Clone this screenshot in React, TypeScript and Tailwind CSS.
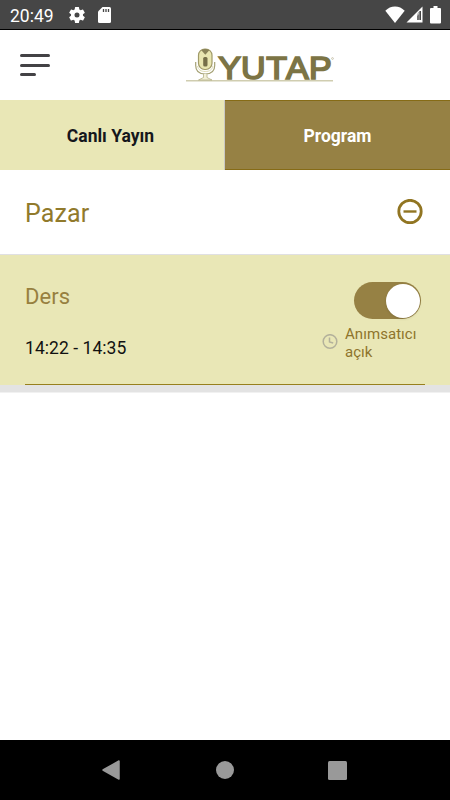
interface TabProps {
  title: string;
  className: string;
}

interface ProgramProps {
  item: { title: string; time: string; reminder: string };
}

const StatusBar = () => {
  return (
    <div className="h-[30px] shrink-0 bg-[#464646] border-b border-black flex items-center pl-[10px] pr-[9px] text-white">
      <p className="w-[45px] pt-[2px] text-[17.5px] leading-[20px] whitespace-nowrap">
        20:49
      </p>
      {/* settings */}
      <svg className="ml-[12px] mt-px w-[20px] h-[20px]" viewBox="0 0 24 24" fill="#fff">
        <path d="M19.14 12.94c.04-.3.06-.61.06-.94 0-.32-.02-.64-.07-.94l2.03-1.58a.49.49 0 0 0 .12-.61l-1.92-3.32a.49.49 0 0 0-.59-.22l-2.39.96c-.5-.38-1.03-.7-1.62-.94l-.36-2.54a.48.48 0 0 0-.48-.41h-3.84a.47.47 0 0 0-.47.41l-.36 2.54c-.59.24-1.13.57-1.62.94l-2.39-.96a.48.48 0 0 0-.59.22L2.74 8.87a.47.47 0 0 0 .12.61l2.03 1.58c-.05.3-.09.63-.09.94s.02.64.07.94l-2.03 1.58a.49.49 0 0 0-.12.61l1.92 3.32c.12.22.37.29.59.22l2.39-.96c.5.38 1.03.7 1.62.94l.36 2.54c.05.24.24.41.48.41h3.84c.24 0 .44-.17.47-.41l.36-2.54c.59-.24 1.13-.56 1.62-.94l2.39.96c.22.08.47 0 .59-.22l1.92-3.32a.47.47 0 0 0-.12-.61zM12 15a3 3 0 1 1 0-6 3 3 0 0 1 0 6z" />
      </svg>
      {/* sd card */}
      <svg className="ml-[11px] mt-px w-[13px] h-[16px]" viewBox="0 0 13 16">
        <path d="M4.5 0h7A1.5 1.5 0 0 1 13 1.5v13a1.5 1.5 0 0 1-1.5 1.5h-10A1.5 1.5 0 0 1 0 14.5V4.5z" fill="#fff" />
        <path d="M5.5 2v3M8 2v3M10.5 2v3" stroke="#464646" strokeWidth="1.3" />
      </svg>
      <div className="ml-auto flex items-center">
        {/* wifi */}
        <svg className="w-[20px] h-[17px]" viewBox="0 0 20 17">
          <path d="M10 17L.3 4.8C3 2 6.3.5 10 .5s7 1.5 9.7 4.3z" fill="#fff" />
        </svg>
        {/* mobile signal */}
        <svg className="ml-[1px] w-[17px] h-[17px]" viewBox="0 0 17 17">
          <path d="M16.5.5v16H.5z" fill="#fff" />
          <path d="M15 5v9h-1.5V5z" fill="#464646" />
          <path d="M13.5 5v9H11V8.5z" fill="#464646" fillOpacity=".75" />
          <path d="M11 8.5l2-2V8l-2 2z" fill="#fff" fillOpacity=".6" />
        </svg>
        {/* battery */}
        <svg className="ml-[7px] w-[11px] h-[18px]" viewBox="0 0 11 18">
          <path d="M3.5 0h4v2H10a1 1 0 0 1 1 1v13.5a1 1 0 0 1-1 1H1a1 1 0 0 1-1-1V3a1 1 0 0 1 1-1h2.5z" fill="#fff" />
        </svg>
      </div>
    </div>
  );
};

const Logo = () => {
  return (
    <svg className="w-[150px] h-[40px]" viewBox="185 45 150 40">
      <path d="M186 80.800H333" stroke="#d0cdb0" strokeWidth="1.5" />
      {/* microphone */}
      <path d="M195.700 62v3.500c0 5.500 3.500 8.500 9.500 8.500s9.500-3 9.500-8.500V62" fill="none" stroke="#a5a174" strokeWidth="1.2" />
      <path d="M197.500 66c.8 4 3.500 5.500 7.700 5.500s6.900-1.500 7.700-5.500" fill="none" stroke="#dedbb4" />
      <path d="M203.500 74v3.500l-5 2.500h13.500l-5-2.500V74" fill="#f1efd6" stroke="#b5b189" strokeWidth=".8" />
      <rect x="198.500" y="49" width="13.500" height="20.500" rx="6.200" fill="#e9e6b0" stroke="#a09a68" strokeWidth="1.2" />
      <path d="M201.300 50.300c2.200-1.800 5.800-1.800 8 0l-4 4.500z" fill="#8a8358" />
      <rect x="203.200" y="57" width="4.300" height="9.500" rx="1.500" fill="#766f48" />
      {/* brand name, spaced letter by letter */}
      <text
        x="202.2 223.2 246.6 264.9 286.2"
        y="79"
        transform="scale(1.08 1)"
        fill="#7c7445"
        stroke="#7c7445"
        strokeWidth="1.7"
        className="font-['Liberation_Sans',sans-serif] text-[31.5px]"
      >
        YUTAP
      </text>
      <circle cx="332.500" cy="58.500" r=".9" fill="none" stroke="#a39b78" strokeWidth=".5" />
    </svg>
  );
};

const Header = () => {
  return (
    <div className="h-[70px] shrink-0 flex pl-[20px]">
      <div className="flex flex-col pt-[24px] w-[30px]">
        <div className="h-[3px] w-[30px] rounded-full bg-[#434245]"></div>
        <div className="mt-[6.5px] h-[3px] w-[30px] rounded-full bg-[#434245]"></div>
        <div className="mt-[6px] h-[3px] w-[16px] rounded-full bg-[#434245]"></div>
      </div>
      <div className="ml-[135px] pt-[15px]">
        <Logo />
      </div>
    </div>
  );
};

const Tab = ({ title, className }: TabProps) => {
  return (
    <div
      className={`flex items-center justify-center pt-[2px] text-[17.5px] font-bold whitespace-nowrap ${className}`}
    >
      {title}
    </div>
  );
};

const ProgramItem = ({ item }: ProgramProps) => {
  return (
    <div className="h-[130px] bg-[#e9e7b6] px-[25px]">
      <div className="h-full flex justify-between border-b border-[#97801d]">
        <div className="flex flex-col">
          <p className="mt-[28px] text-[22px] leading-[28px] tracking-[0.1px] text-[#97803f]">{item.title}</p>
          <p className="mt-[26px] text-[17.5px] leading-[22px] tracking-[0.05px] text-[#111]">{item.time}</p>
        </div>

        {/* reminder */}
        <div className="w-[103px] flex flex-col">
          <div className="mt-[27px] ml-[32px] w-[67px] h-[37px] rounded-full bg-[#968144] flex items-center justify-end pr-[1px]">
            <div className="size-[34px] rounded-full bg-white shadow-sm"></div>
          </div>
          <div className="mt-[7px] flex">
            <svg className="mt-[8px] w-[16px] h-[16px]" viewBox="0 0 16 16" fill="none" stroke="#b3b19b" strokeWidth="1.5">
              <circle cx="8" cy="7.5" r="6.8" />
              <path d="M7.5 3.5V8l3.700 1" />
            </svg>
            <p className="ml-[7px] w-[76px] text-[15px] leading-[17.5px] tracking-[0.05px] text-[#8e742c]">
              {item.reminder}
            </p>
          </div>
        </div>
      </div>
    </div>
  );
};

const NavigationBar = () => {
  return (
    <div className="h-[60px] shrink-0 bg-black flex items-center pl-[102px]">
      <svg className="w-[18px] h-[20px]" viewBox="0 0 18 20">
        <path d="M17 1v18L1 10z" fill="#999" stroke="#999" strokeWidth="1.5" strokeLinejoin="round" />
      </svg>
      <div className="ml-[96px] size-[18px] rounded-full bg-[#999]"></div>
      <div className="ml-[94px] size-[19px] rounded-[1.5px] bg-[#999]"></div>
    </div>
  );
};

const App = () => {
  const lesson = { title: "Ders", time: "14:22 - 14:35", reminder: "Anımsatıcı açık" };

  return (
    <div className="w-[450px] h-[800px] flex flex-col overflow-hidden bg-white font-[Roboto,sans-serif]">
      <StatusBar />
      <Header />

      {/* tabs */}
      <div className="h-[70px] shrink-0 flex">
        <Tab title="Canlı Yayın" className="w-[224px] pr-[3px] bg-[#e9e7b6] text-[#15171c]" />
        <div className="w-px bg-[#c9c8c4]"></div>
        <Tab title="Program" className="flex-1 bg-[#968144] border-y border-[#866b16] text-white" />
      </div>

      {/* day */}
      <div className="h-[85px] shrink-0 flex items-center justify-between pl-[25px] pr-[27px] border-b border-[#e0e0e3]">
        <p className="pt-[3px] text-[25px] leading-[30px] tracking-[0.1px] text-[#917a2c]">Pazar</p>
        <svg className="w-[26px] h-[26px]" viewBox="0 0 26 26" fill="none" stroke="#917522">
          <circle cx="13" cy="12.5" r="11.2" strokeWidth="2.8" />
          <path d="M6.5 12.5h13" strokeWidth="2.4" />
        </svg>
      </div>

      <ProgramItem item={lesson} />
      <div className="h-[8px] shrink-0 bg-[#e3e3e3] border-b border-[#f1f1f1]"></div>

      <div className="flex-1"></div>
      <NavigationBar />
    </div>
  );
};

export default App;
